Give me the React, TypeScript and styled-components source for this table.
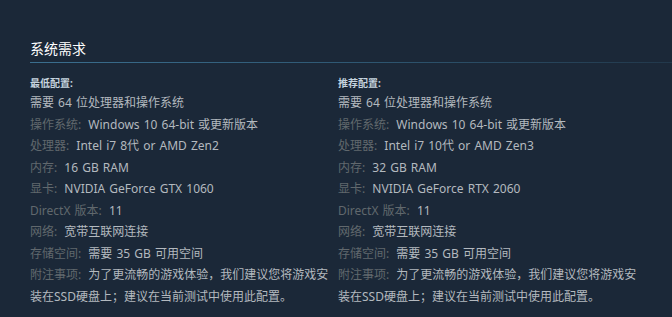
import styled, { createGlobalStyle } from 'styled-components';

const GlobalStyle = createGlobalStyle`
  html, body {
    margin: 0;
    padding: 0;
    background: #1b2838;
  }
  body {
    font-family: 'Noto Sans', 'Noto Sans CJK SC', sans-serif;
  }
`;

const Page = styled.div`
  width: 672px;
  height: 317px;
  box-sizing: border-box;
  padding: 39px 0 0 30px;
  background: #1b2838;
  overflow: hidden;
`;

const Title = styled.h2`
  margin: 0;
  padding: 0 0 3px;
  font-size: 14px;
  line-height: 20px;
  font-weight: normal;
  color: #ffffff;
  border-bottom: 1px solid transparent;
  border-image: linear-gradient(to right, #3b6f8f 0%, #2f5873 50%, #22384b 100%) 1;
`;

const Columns = styled.div`
  display: grid;
  grid-template-columns: 300px 300px;
  column-gap: 8px;
  padding-top: 13px;
`;

const Column = styled.div`
  display: flex;
  flex-direction: column;
`;

const ColumnHead = styled.strong`
  font-size: 10px;
  line-height: 14px;
  font-weight: bold;
  color: #c6d4df;
  margin-bottom: 2px;
`;

const List = styled.ul`
  list-style: none;
  margin: 0;
  padding: 0;
`;

const Item = styled.li`
  font-size: 12px;
  line-height: 21.5px;
  word-spacing: 1px;
  color: #b3b9bf;
`;

const Label = styled.span`
  color: #61686d;
  margin-right: 3px;
`;

type Req = { label?: string; value: string };

const minimum: Req[] = [
  { value: '需要 64 位处理器和操作系统' },
  { label: '操作系统:', value: 'Windows 10 64-bit 或更新版本' },
  { label: '处理器:', value: 'Intel i7 8代 or AMD Zen2' },
  { label: '内存:', value: '16 GB RAM' },
  { label: '显卡:', value: 'NVIDIA GeForce GTX 1060' },
  { label: 'DirectX 版本:', value: '11' },
  { label: '网络:', value: '宽带互联网连接' },
  { label: '存储空间:', value: '需要 35 GB 可用空间' },
  { label: '附注事项:', value: '为了更流畅的游戏体验，我们建议您将游戏安装在SSD硬盘上；建议在当前测试中使用此配置。' },
];

const recommended: Req[] = [
  { value: '需要 64 位处理器和操作系统' },
  { label: '操作系统:', value: 'Windows 10 64-bit 或更新版本' },
  { label: '处理器:', value: 'Intel i7 10代 or AMD Zen3' },
  { label: '内存:', value: '32 GB RAM' },
  { label: '显卡:', value: 'NVIDIA GeForce RTX 2060' },
  { label: 'DirectX 版本:', value: '11' },
  { label: '网络:', value: '宽带互联网连接' },
  { label: '存储空间:', value: '需要 35 GB 可用空间' },
  { label: '附注事项:', value: '为了更流畅的游戏体验，我们建议您将游戏安装在SSD硬盘上；建议在当前测试中使用此配置。' },
];

function ReqColumn({ head, rows }: { head: string; rows: Req[] }) {
  return (
    <Column>
      <ColumnHead>{head}</ColumnHead>
      <List>
        {rows.map((r, i) => (
          <Item key={i}>
            {r.label && <Label>{r.label}</Label>}
            {r.label && ' '}
            {r.value}
          </Item>
        ))}
      </List>
    </Column>
  );
}

export default function App() {
  return (
    <Page>
      <GlobalStyle />
      <Title>系统需求</Title>
      <Columns>
        <ReqColumn head="最低配置:" rows={minimum} />
        <ReqColumn head="推荐配置:" rows={recommended} />
      </Columns>
    </Page>
  );
}
